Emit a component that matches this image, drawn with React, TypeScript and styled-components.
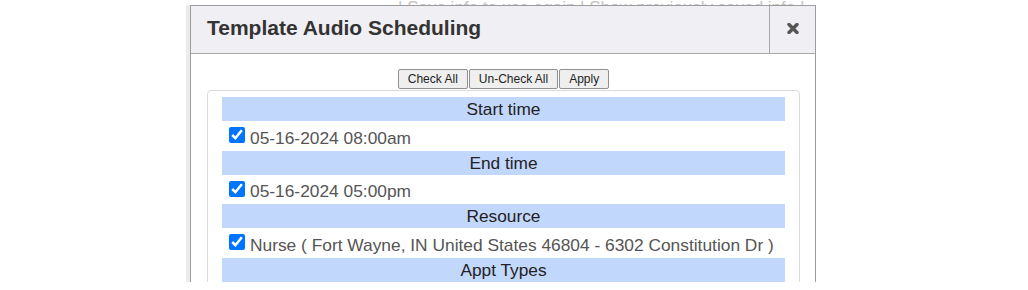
import React from "react";
import styled, { createGlobalStyle } from "styled-components";

const GlobalStyle = createGlobalStyle`
  html, body { margin: 0; padding: 0; background: #ffffff; }
  body { font-family: "Liberation Sans", Arial, sans-serif; }
`;

const Scene = styled.div`
  position: relative;
  width: 1028px;
  height: 282px;
  overflow: hidden;
  background: #ffffff;
`;

const BackdropLine = styled.div`
  margin-top: -2px;
  padding-left: 398px;
  font-size: 17px;
  line-height: 20px;
  color: #c4c4c4;
  white-space: nowrap;
`;

const Modal = styled.div`
  position: absolute;
  left: 190px;
  top: 5px;
  width: 624px;
  border: 1px solid #9c9c9c;
  background: #ffffff;
  box-shadow: -4px 0 0 #ebebeb;
`;

const Header = styled.div`
  display: flex;
  height: 47px;
  background: #efeff4;
  border-bottom: 1px solid #a8a8a8;
`;

const Title = styled.h1`
  flex: 1;
  margin: 0;
  padding: 0 0 4px 16px;
  display: flex;
  align-items: center;
  font-size: 21px;
  font-weight: bold;
  color: #333333;
`;

const CloseCell = styled.button`
  width: 46px;
  border: none;
  border-left: 1px solid #a8a8a8;
  background: transparent;
  padding: 0 0 2px;
  display: flex;
  align-items: center;
  justify-content: center;
  cursor: pointer;
`;

const Body = styled.div`
  padding: 15px 15px 0 16px;
`;

const ButtonBar = styled.div`
  display: flex;
  justify-content: center;
  gap: 1px;
`;

const ActionButton = styled.button`
  height: 20px;
  padding: 0 9px;
  border: 1px solid #8f8f8f;
  border-radius: 2px;
  background: #efefef;
  color: #222222;
  font-family: "Liberation Sans", Arial, sans-serif;
  font-size: 12px;
  line-height: 18px;
`;

const Panel = styled.div`
  margin-top: 1px;
  border: 1px solid #dadada;
  border-radius: 4px;
  padding: 6px 14px 20px;
`;

const SectionHeader = styled.div`
  background: #c2d7fc;
  text-align: center;
  font-size: 17.3px;
  line-height: 20px;
  padding: 2px 0;
  color: #222222;
`;

const Row = styled.label`
  display: flex;
  align-items: flex-start;
  padding: 6px 0 3px 7px;
  font-size: 17.35px;
  color: #555555;
`;

const Check = styled.input`
  width: 16px;
  height: 16px;
  margin: 0 5px 0 0;
  flex: none;
`;

const RowText = styled.span`
  margin-top: 0.5px;
  line-height: 20px;
  white-space: nowrap;
`;

const CloseIcon = () => (
  <svg width="12" height="11" viewBox="0 0 12 11">
    <path d="M2 1.5 L10 9.5 M10 1.5 L2 9.5" stroke="#555" strokeWidth="3.4" strokeLinecap="round" />
  </svg>
);

const sections = [
  { title: "Start time", item: "05-16-2024 08:00am" },
  { title: "End time", item: "05-16-2024 05:00pm" },
  { title: "Resource", item: "Nurse ( Fort Wayne, IN United States 46804 - 6302 Constitution Dr )" },
  { title: "Appt Types", item: "" },
];

export default function App() {
  return (
    <>
      <GlobalStyle />
      <Scene>
        <BackdropLine>| Save info to use again | Show previously saved info |</BackdropLine>
        <Modal>
          <Header>
            <Title>Template Audio Scheduling</Title>
            <CloseCell aria-label="Close">
              <CloseIcon />
            </CloseCell>
          </Header>
          <Body>
            <ButtonBar>
              <ActionButton>Check All</ActionButton>
              <ActionButton>Un-Check All</ActionButton>
              <ActionButton>Apply</ActionButton>
            </ButtonBar>
            <Panel>
              {sections.map((s) => (
                <React.Fragment key={s.title}>
                  <SectionHeader>{s.title}</SectionHeader>
                  {s.item && (
                    <Row>
                      <Check type="checkbox" defaultChecked />
                      <RowText>{s.item}</RowText>
                    </Row>
                  )}
                </React.Fragment>
              ))}
            </Panel>
          </Body>
        </Modal>
      </Scene>
    </>
  );
}
